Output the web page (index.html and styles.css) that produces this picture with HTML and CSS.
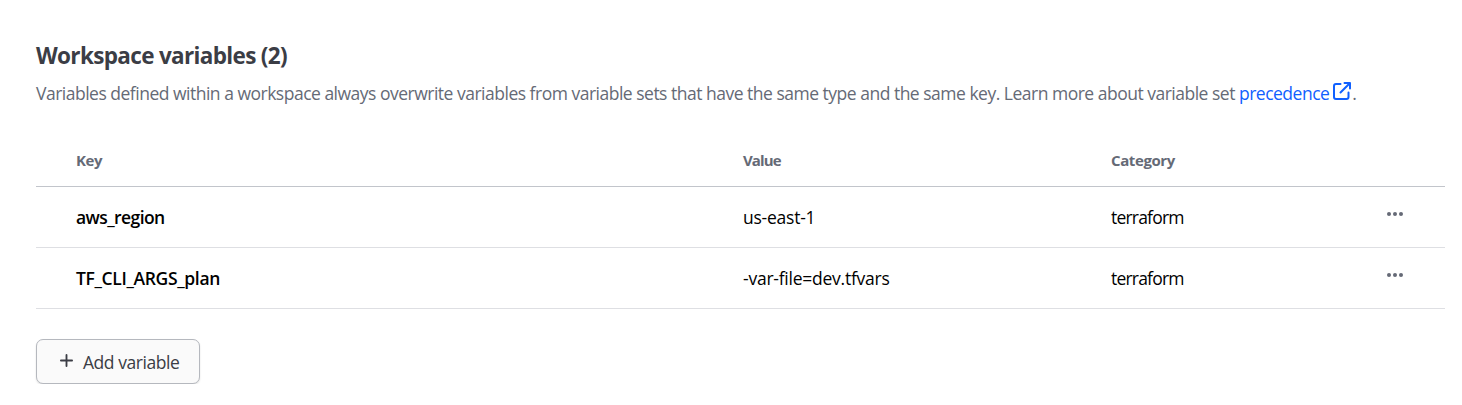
FILE: index.html
```html
<!DOCTYPE html>
<html lang="en">
<head>
<meta charset="utf-8">
<title>Workspace variables</title>
<link rel="stylesheet" href="styles.css">
</head>
<body>
<main class="panel">
  <h2 class="title">Workspace variables (2)</h2>
  <p class="intro"><span>Variables defined within a workspace always overwrite variables from variable sets that have the same type and the same key. Learn more about variable set</span> <a class="link" href="#">precedence<svg class="ext" viewBox="0 0 20 20"><path d="M8.5 3H4a2 2 0 0 0-2 2v11a2 2 0 0 0 2 2h10.500a2 2 0 0 0 2-2v-4.500M12.500 2H18v5.500M18 2L8.500 11.500"/></svg></a>.</p>
  <div class="table">
    <div class="row head"><span class="head-key">Key</span><span class="head-value">Value</span><span>Category</span><span></span></div>
    <div class="row"><span class="key region">aws_region</span><span class="value">us-east-1</span><span class="cat">terraform</span><svg class="dots" viewBox="0 0 16 4"><circle cx="2" cy="2" r="2"/><circle cx="8" cy="2" r="2"/><circle cx="14" cy="2" r="2"/></svg></div>
    <div class="row"><span class="key">TF_CLI_ARGS_plan</span><span class="value">-var-file=dev.tfvars</span><span class="cat">terraform</span><svg class="dots" viewBox="0 0 16 4"><circle cx="2" cy="2" r="2"/><circle cx="8" cy="2" r="2"/><circle cx="14" cy="2" r="2"/></svg></div>
  </div>
  <button class="add"><svg class="plus" viewBox="0 0 14 14"><path d="M7 1v12M1 7h12"/></svg><span>Add variable</span></button>
</main>
</body>
</html>
```
FILE: styles.css
```css
* { box-sizing: border-box; }
body { margin: 0; background: #fff; font-family: "Open Sans", "Noto Sans", sans-serif; }
.panel { padding: 41px 17px 0 36px; }
.title { margin: 0; font-size: 22.5px; line-height: 30px; font-weight: 700; color: #3b3d45; letter-spacing: -0.66px; }
.intro { margin: 7px 0 0; font-size: 17.5px; line-height: 30px; color: #656a76; letter-spacing: -0.498px; white-space: nowrap; }
.link { color: #1060ff; text-decoration: none; }
.ext { width: 20px; height: 20px; margin-left: 3px; vertical-align: -1px; fill: none; stroke: currentColor; stroke-width: 2; stroke-linecap: round; stroke-linejoin: round; }
.table { margin-top: 27px; }
.row { display: grid; grid-template-columns: 667px 368px 276px 18px; align-items: center; height: 61px; padding-left: 40px; border-bottom: 1px solid #dedfe3; font-size: 17.5px; color: #000; }
.head { height: 52px; padding-bottom: 2px; border-color: #c2c5cb; font-size: 15px; font-weight: 700; color: #656a76; letter-spacing: -0.4px; }
.head-value { letter-spacing: -0.9px; }
.key { font-weight: 600; letter-spacing: -0.35px; }
.region { letter-spacing: -0.58px; }
.value { letter-spacing: -0.24px; }
.cat { letter-spacing: -0.8px; }
.dots { width: 16px; height: 4px; margin-top: -7px; fill: #656a76; }
.add { display: flex; align-items: center; width: 164px; height: 45px; margin-top: 30px; padding: 0 0 0 23px; gap: 10px; border: 1px solid #b5b8be; border-radius: 7px; background: #fafafa; box-shadow: 0 1px 2px rgba(0,0,0,.12); font: inherit; font-size: 17.5px; letter-spacing: -0.45px; color: #3b3d45; white-space: nowrap; }
.plus { width: 13px; height: 13px; margin-top: -2px; fill: none; stroke: currentColor; stroke-width: 2; stroke-linecap: round; }
```
